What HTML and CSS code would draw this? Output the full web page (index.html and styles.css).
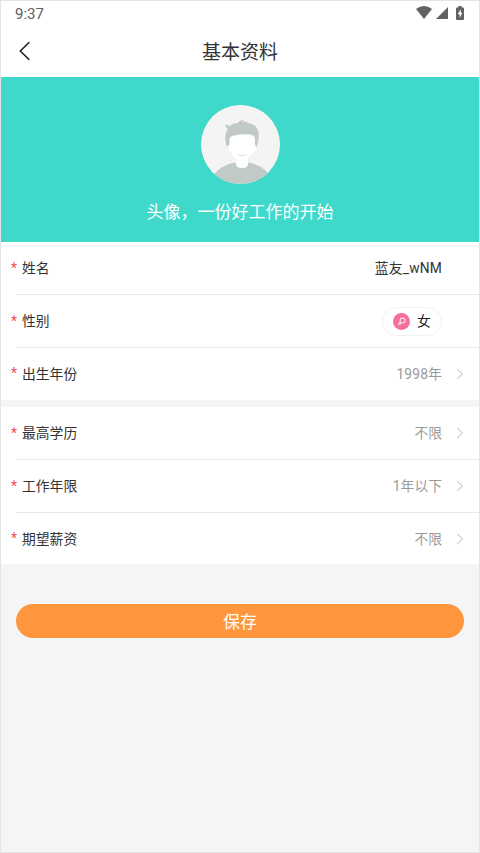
FILE: index.html
```html
<!DOCTYPE html>
<html lang="zh-CN">
<head>
<meta charset="utf-8">
<meta name="viewport" content="width=device-width, initial-scale=1">
<title>基本资料</title>
<link rel="stylesheet" href="styles.css">
</head>
<body>
<div class="screen">
  <div class="status">
    <span class="clock">9:37</span>
    <div class="status-icons">
      <svg class="wifi" width="16" height="13" viewBox="0 0 16 13"><path d="M0 3Q8-3 16 3L8 13Z"/></svg>
      <svg class="signal" width="12" height="12" viewBox="0 0 12 12"><path d="M12 0V12H0Z"/></svg>
      <svg class="battery" width="8" height="14" viewBox="0 0 8 14"><path d="M2.3 0h3.4v1.4H7q1 0 1 1V13q0 1-1 1H1q-1 0-1-1V2.4q0-1 1-1h1.3z"/><path class="bolt" d="M4.7 3.3 1.7 8.2h1.9v3.7l2.8-5.1H4.7z"/></svg>
    </div>
  </div>
  <header class="navbar">
    <svg class="back" width="12" height="20" viewBox="0 0 12 20"><path d="M10.3 1.2 1.3 10l9 8.8"/></svg>
    <h1>基本资料</h1>
  </header>
  <section class="hero">
    <svg class="avatar" width="79" height="79" viewBox="0 0 79 79">
      <defs><clipPath id="face"><circle cx="39.5" cy="39.5" r="39.5"/></clipPath></defs>
      <g clip-path="url(#face)">
        <rect width="79" height="79" fill="#f4f4f4"/>
        <path d="M10 73C16 64 25 59 34.500 57.500H47C56 59 65 63 70 73V79H10Z" fill="#c2cac8"/>
        <path d="M35 49H47V59Q47 63 41 63Q35 63 35 59Z" fill="#fff"/>
        <path d="M26.500 43C23.500 36 23.500 29 27 24Q24 23 24.500 19L29 21Q31 18 37 18Q38 15 43 15L41.500 17L47 16.500L46 18C55 18 59 25 57.500 34Q57 39 55 43Z" fill="#c2cac8"/>
        <path d="M28.500 34Q29 31 33 30.500Q42 28.500 50 29.500Q53.500 30.500 54 34V40Q56.500 41 54.500 45.500Q53.500 47 52.500 46.500C50 51 46 54 41 54C35 54 31 51 29.500 46.500Q25.500 45 27 40L28.500 40Z" fill="#fff"/>
        <path d="M37 49.500Q41 52 45 49.500" fill="none" stroke="#dedede"/>
      </g>
    </svg>
    <p>头像，一份好工作的开始</p>
  </section>
  <section class="group">
    <div class="row"><i>*</i><span class="label">姓名</span><span class="value dark">蓝友_wNM</span></div>
    <div class="row"><i>*</i><span class="label">性别</span>
      <span class="gender"><svg width="17" height="17" viewBox="0 0 17 17"><circle cx="8.500" cy="8.500" r="8.500" fill="#f66da0"/><g fill="none" stroke="#ffe3ed" stroke-width="1.100"><circle cx="9.600" cy="7.600" r="2.500"/><path d="m7.800 9.400-2.500 2.400M5.500 9.300l2.200 2.200"/></g></svg>女</span>
    </div>
    <div class="row"><i>*</i><span class="label">出生年份</span><span class="value year">1998年</span><svg class="chevron" width="8" height="12" viewBox="0 0 8 12"><path d="m1.200 1 5.300 5-5.300 5"/></svg></div>
  </section>
  <section class="group second">
    <div class="row"><i>*</i><span class="label">最高学历</span><span class="value">不限</span><svg class="chevron" width="8" height="12" viewBox="0 0 8 12"><path d="m1.200 1 5.300 5-5.300 5"/></svg></div>
    <div class="row"><i>*</i><span class="label">工作年限</span><span class="value">1年以下</span><svg class="chevron" width="8" height="12" viewBox="0 0 8 12"><path d="m1.200 1 5.300 5-5.300 5"/></svg></div>
    <div class="row"><i>*</i><span class="label">期望薪资</span><span class="value">不限</span><svg class="chevron" width="8" height="12" viewBox="0 0 8 12"><path d="m1.200 1 5.300 5-5.300 5"/></svg></div>
  </section>
  <button class="save">保存</button>
</div>
</body>
</html>
```
FILE: styles.css
```css
* { box-sizing: border-box; }
body { margin: 0; font-family: Roboto, "Noto Sans CJK SC", sans-serif; color: #333; }
.screen { height: 853px; border: 1px solid #e4e4e4; background: #f5f5f5; overflow: hidden; }
.status { height: 25px; padding: 0 14px; display: flex; justify-content: space-between; align-items: center; background: #fff; }
.clock { padding-top: 1px; font-size: 15px; line-height: 25px; color: #606060; }
.status-icons { display: flex; align-items: center; margin: 0 1px 2px 0; fill: #626262; }
.signal { margin: 1px 8px 0 4px; }
.bolt { fill: #fff; }
.navbar { height: 51px; background: #fff; display: grid; grid-template-columns: 60px 1fr 60px; align-items: center; }
.back { margin: 0 0 2px 18px; fill: none; stroke: #222; stroke-width: 1.6; }
h1 { margin: 0; padding-top: 2px; font-size: 19px; line-height: 28px; font-weight: 400; text-align: center; }
.hero { height: 165px; padding-top: 28px; background: #3ed9cb; text-align: center; }
.avatar { display: block; margin: 0 auto; }
.hero p { margin: 16px 0 0; color: #fff; font-size: 17px; line-height: 24px; }
.group { background: #fff; }
.second { margin-top: 7px; }
.row { height: 53px; margin-left: 10px; padding: 0 15px 1px 0; display: flex; align-items: center; font-size: 13.8px; line-height: 20px; background: linear-gradient(#e8e8e8, #e8e8e8) 5px 100% / 100% 1px no-repeat; }
.row:last-child { height: 52px; padding-bottom: 1px; background: none; }
.second .row:last-child { height: 51px; padding-bottom: 0; }
.row i { width: 11px; padding-bottom: 1px; font-style: normal; font-size: 14px; color: #f05058; }
.value { margin-left: auto; color: #999; }
.year { letter-spacing: .15px; }
.dark { margin-right: 22px; color: #333; letter-spacing: .2px; }
.chevron { margin-left: 14px; fill: none; stroke: #d4d4d4; stroke-width: 1.2; }
.gender { width: 60px; height: 29px; margin: 0 22px 0 auto; padding-left: 10px; display: flex; align-items: center; gap: 7px; border: 1px solid #f1f1f1; border-radius: 15px; color: #222; }
.save { display: block; width: 448px; height: 34px; margin: 40px auto 0; padding: 2px 0 0; border: 0; border-radius: 17px; background: #ff963d; color: #fff; font: 17px/32px Roboto, "Noto Sans CJK SC", sans-serif; }
```
